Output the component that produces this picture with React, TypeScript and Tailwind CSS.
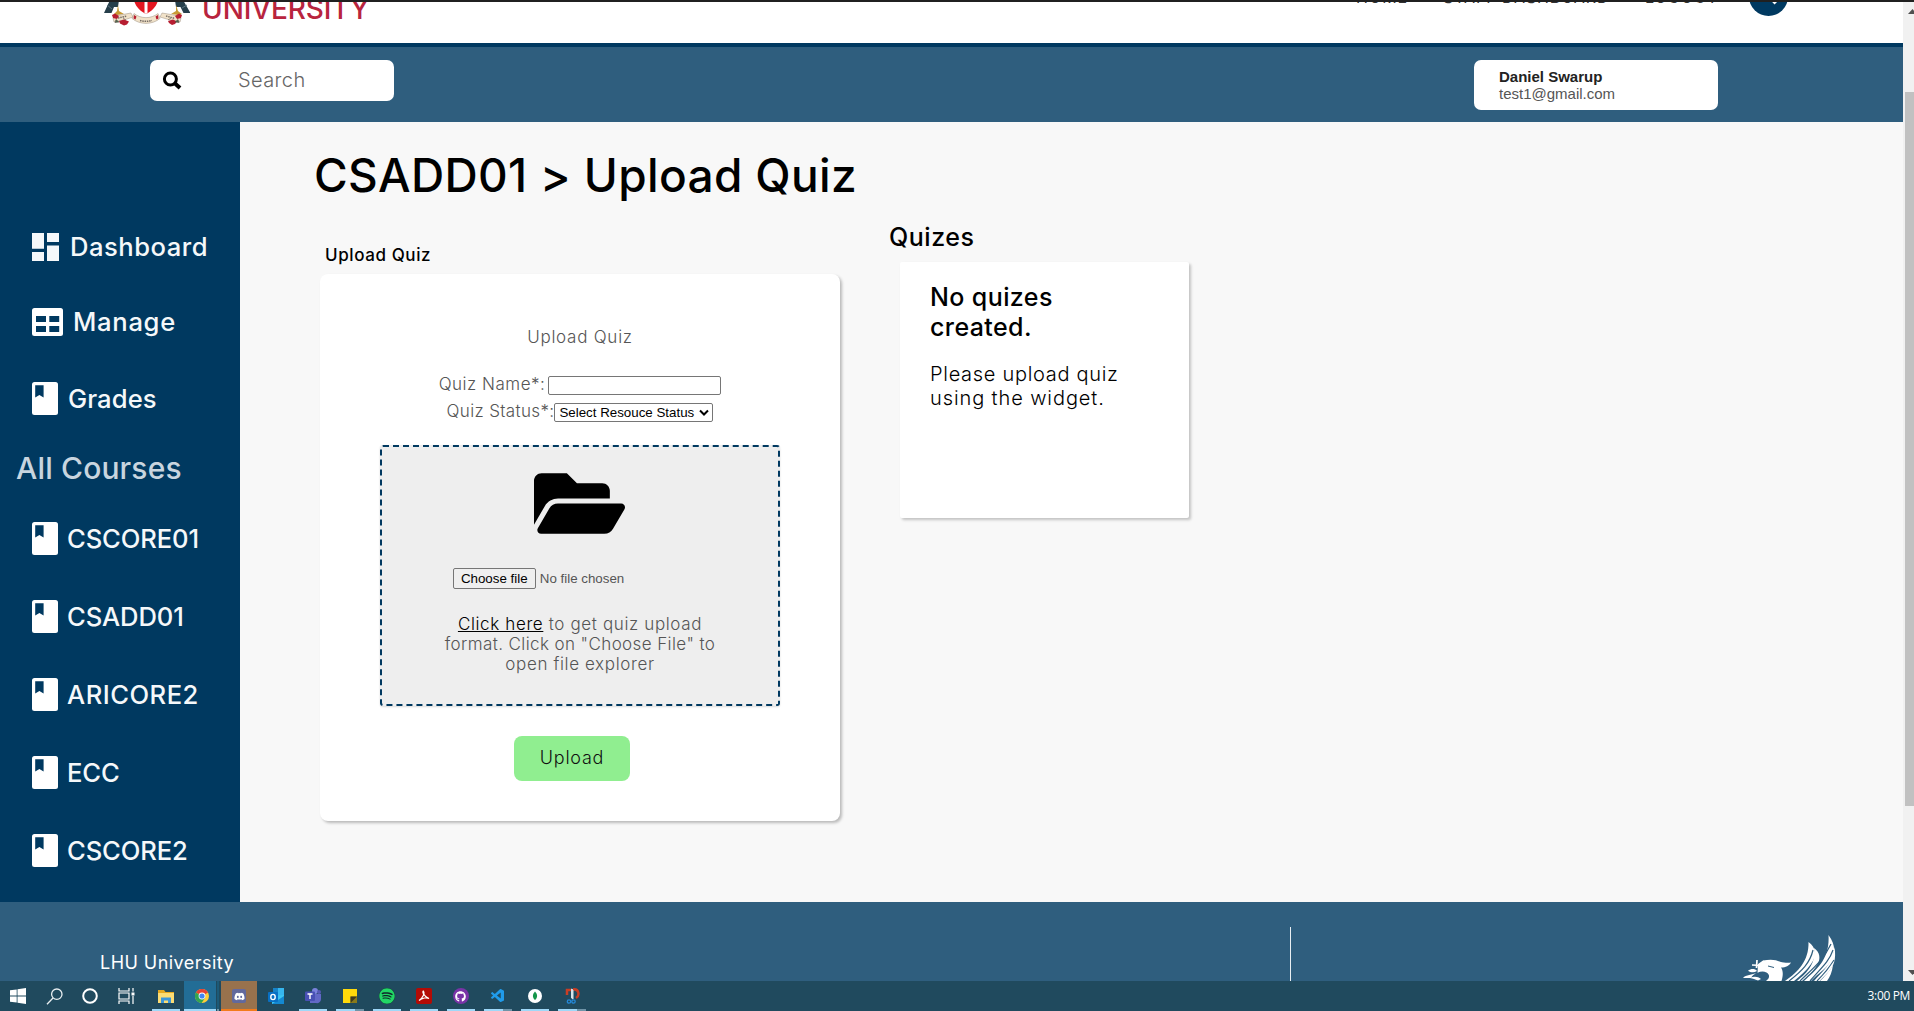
import React from 'react';
import { FaFolderOpen, FaSpotify, FaGithub, FaDiscord } from 'react-icons/fa';
import { VscVscode } from 'react-icons/vsc';

const BookIcon = () => (
  <svg className="-mt-px h-[33px] w-[26px]" viewBox="0 0 26 33">
    <rect width="26" height="33" rx="2.5" fill="#fff" />
    <path d="M3.200 3.200h8.400v12.400l-4.200-2.500-4.200 2.500z" fill="#003960" />
  </svg>
);

const DashboardIcon = () => (
  <svg className="h-7 w-[27px]" viewBox="0 0 27 28" fill="#f5f8fa">
    <path d="M0 0h12v15.7H0zM0 19h12v9H0zM15 0h12v9H15zM15 12.5h12V28H15z" />
  </svg>
);

const TableIcon = () => (
  <svg className="-mt-px h-7 w-[31px]" viewBox="0 0 31 28">
    <rect width="31" height="28" rx="2.5" fill="#fff" />
    <path d="M4 8h10v6H4zM17.3 8h9.9v6h-9.9zM4 18h10v6H4zM17.3 18h9.9v6h-9.9z" fill="#003960" />
  </svg>
);

const Crest = () => (
  <svg className="h-7 w-[90px]" viewBox="100 0 90 28">
    <path d="M110 0h9l-1 7h-4l-2.500 6h-7.500z" fill="#263f4b" />
    <path d="M175 0h8l7.500 13h-7l-3-6h-4.500z" fill="#263f4b" />
    <path d="M107 5l5 4M182 8l5-3" stroke="#5b7480" strokeWidth="1" />
    <path d="M118 5l1 6 5 3-7 1-3-1 3-3zM176 5l0 6-5 3 7 1 4-1-4-3z" fill="#c79a35" />
    <path d="M134 0h24c-1 6-6 11-12 14-6-3-11-8-12-14z" fill="#e31620" />
    <path d="M144.500 0h3v13l-1.500 1-1.500-1z" fill="#fff" />
    <path d="M113 18l7-3 11-2 2 4-9 3-10 2z" fill="#f1e2c9" stroke="#9b8f80" strokeWidth=".5" />
    <path d="M181 18l-7-3-12-2-2 4 10 3 10 2z" fill="#f1e2c9" stroke="#9b8f80" strokeWidth=".5" />
    <path d="M134 13.500c7 5.500 17 5.500 24 0l2 5c-8 6.500-20 6.500-28 0z" fill="#f1e2c9" stroke="#9b8f80" strokeWidth=".5" />
    <path d="M140 20.500c4 1 8 1 12 0M118 18l9-2M166 16l9 2.500" stroke="#766d65" strokeWidth="1.500" strokeDasharray="1.500 .8" fill="none" />
    <path d="M112 15l3-1.500 4 2.500-2 3-4-1zM119 21l5-1.500 5 2-2 3-3 1-4-2zM134 15l2.500 1.500-1 3-2-1zM158 15l-2.500 1.500 1 3 2-1zM182 15l-3-1.500-4 2.500 2 3 4-1zM168 21l5-1.500 4 2-2 2.500-3 1-3-2z" fill="#b71e31" />
    <path d="M116 19.500l3 2.500-4 .5zM178 19.500l-3 2.500 4 .5zM123 18l3 2M171 18l-3 2" fill="#4c6a4e" stroke="#5b5147" strokeWidth=".6" />
  </svg>
);

const Phoenix = () => (
  <svg className="h-[47px] w-[96px]" viewBox="1741 934 96 47" fill="#fff">
    <path d="M1758 964l5-3.500c7-1.500 13-1 17 1.200 4 .9 7 1.300 11 .8-2 3.500-5 5-10 5 2 3 2.500 7 .5 13.500h-15.500c4-3 4-6.500.5-8.500-3-1.500-6-1-9 .2z" />
    <path d="M1757 960l-.5 8M1752 965l10 .5M1764 961l-4 8" stroke="#fff" strokeWidth="1.700" />
    <path d="M1768 966l6 1.500" stroke="#2f5e7e" strokeWidth="1" />
    <path d="M1757 971c-2-2.500-6-2.500-9-.3 3 2 6 2.300 9 .3zM1757 973c-4 1.500-5 3.500-6 4.800-3 0-6 .7-8 0 3-2.800 9-3.300 14-4.800zM1750 978c4-2 8-1.500 11 1l-3 1.500c-3-1.200-5-1.700-8-2.500z" />
    <path d="M1785 981c13-9 24-20 23.500-39 8 6 8.500 14 2.500 22-5 7-11 12-17 17z" />
    <path d="M1797 981c11-9 19-18 17-33 6 4 7 11 3 17-4 7-10 11-15 16z" />
    <path d="M1804 981c13-12 26-22 24.500-46 9 12 6 22-.5 30-6 7-13 11-17 16z" />
    <path d="M1814 981c9-10 18-17 20.500-34 2 13-1 19-6 25l-9 9z" />
    <path d="M1820 981c5-5 9-9 13-16-1 7-3 12-6 16z" />
    <path d="M1789 981c13-10 21-18 24-31M1800 981c12-12 23-20 31-37M1810 981c10-12 19-19 23-31M1817 981c7-7 12-13 17-21" stroke="#2f5e7e" strokeWidth="1.200" fill="none" />
  </svg>
);

const courses = ['CSCORE01', 'CSADD01', 'ARICORE2', 'ECC', 'CSCORE2'];

function TopBar() {
  return (
    <div className="h-[43px] overflow-hidden border-t-2 border-[#202020] bg-white">
      <div className="-mt-0.5 flex items-start pl-[100px]">
        <Crest />
        <div className="-mt-[5px] ml-[12px] text-[28px] leading-7 font-medium tracking-[-0.1px] text-[#b8243e]">UNIVERSITY</div>
        <div className="-mt-[13px] ml-auto flex text-[16px] leading-5 font-normal text-[#333]">
          <span className="w-[87px] tracking-[1px]">HOME</span>
          <span className="w-[202px] tracking-[.9px]">STAFF DASHBOARD</span>
          <span className="w-[104px] tracking-[1px]">LOGOUT</span>
        </div>
        <div className="mr-[115px] -mt-[23px] size-[39px] rounded-full bg-[#003960]">
          <svg viewBox="0 0 39 39"><path d="M18 17l9 9" stroke="#fff" strokeWidth="4" /></svg>
        </div>
      </div>
    </div>
  );
}

function SearchBar() {
  return (
    <div className="flex h-[79px] items-start justify-between border-t-4 border-[#003960] bg-[#2f5e7e] pt-[13px] pr-[185px] pl-[150px]">
      <div className="flex h-[41px] w-[244px] items-center rounded-[7px] bg-white pl-[12px]">
        <svg className="h-[19px] w-5" viewBox="0 0 20 19" fill="none" stroke="#000">
          <circle cx="8.400" cy="8" r="6" strokeWidth="3" />
          <path d="M12.500 12l5.500 5" strokeWidth="4" />
        </svg>
        <span className="-mt-px ml-[56px] text-[20px] font-light tracking-[.4px] text-[#666]">Search</span>
      </div>
      <div className="h-[50px] w-[244px] rounded-[7px] bg-white pt-2 pl-[25px] font-['Liberation_Sans',sans-serif] text-[15px] leading-[17px]">
        <div className="font-bold text-[#222]">Daniel Swarup</div>
        <div className="text-[#555]">test1@gmail.com</div>
      </div>
    </div>
  );
}

function Sidebar() {
  return (
    <aside className="w-60 shrink-0 bg-[#003960] pt-[87px] text-[25.6px] font-medium text-[#f5f8fa]">
      <div className="flex h-[76px] items-center pl-8"><DashboardIcon /><span className="mt-px ml-[11px] tracking-[.5px]">Dashboard</span></div>
      <div className="flex h-[75px] items-center pl-8"><TableIcon /><span className="ml-[10px] tracking-[.7px]">Manage</span></div>
      <div className="flex h-[78px] items-center pl-8"><BookIcon /><span className="mt-px ml-[10px] tracking-[.1px]">Grades</span></div>
      <div className="-mt-px mb-px flex h-[62px] items-center pl-4 text-[30px] tracking-[.15px] text-[#c8d5df]">All Courses</div>
      {courses.map((c) => (
        <div key={c} className="flex h-[78px] items-center pl-8">
          <BookIcon />
          <span className={`mt-px ml-[9px] ${c === 'ARICORE2' ? 'tracking-[.5px]' : 'tracking-[-.1px]'}`}>{c}</span>
        </div>
      ))}
    </aside>
  );
}

function UploadCard() {
  return (
    <div className="ml-[7px] flex h-[547px] w-[520px] flex-col items-center rounded-lg bg-white text-[17px] font-light tracking-[.5px] text-[#555] shadow-[2px_2px_3px_rgba(0,0,0,.25)]">
      <div className="mt-[53px] leading-5 tracking-[.75px]">Upload Quiz</div>
      <div className="mt-[29px] flex items-center leading-[19px]">
        <span className="-mt-[3px] mr-[3px]">Quiz Name*:</span>
        <div className="h-[19px] w-[173px] rounded-[2px] border border-[#767676] bg-white" />
      </div>
      <div className="mt-2 flex items-center leading-[19px]">
        <span className="-mt-[3px] tracking-[.35px]">Quiz Status*:</span>
        <div className="flex h-[19px] w-[159px] items-center rounded-[2px] border border-[#767676] bg-white pl-1 font-['Liberation_Sans',sans-serif] text-[13.33px] font-normal tracking-normal text-black">
          Select Resouce Status
          <svg className="ml-[5px] h-2 w-[10px]" viewBox="0 0 10 8" fill="none" stroke="#000" strokeWidth="2"><path d="M1 1.500l4 4 4-4" /></svg>
        </div>
      </div>
      <div className="mt-[23px] flex h-[261px] w-[400px] flex-col items-center rounded-[3px] border-2 border-dashed border-[#003960] bg-[#eee] shadow-[0_1px_2px_rgba(0,0,0,.15)]">
        <FaFolderOpen className="mt-[16px] mr-0.5 h-[81px] w-[91px] text-black" />
        <div className="mt-6 mr-[83px] flex items-center font-['Liberation_Sans',sans-serif] text-[13.33px] font-normal tracking-normal">
          <div className="mr-1 flex h-[21px] w-[83px] items-center justify-center rounded-[2px] border border-[#767676] bg-[#efefef] text-black">Choose file</div>
          <span>No file chosen</span>
        </div>
        <p className="mt-[25px] text-center text-[17px] leading-5 tracking-[.63px] whitespace-nowrap">
          <span className="text-black underline">Click here</span> to get quiz upload<br />
          <span className="tracking-[.4px]">format. Click on "Choose File" to</span><br />
          open file explorer
        </p>
      </div>
      <div className="mt-[30px] mr-[16px] flex h-[45px] w-[116px] items-center justify-center rounded-lg bg-[#90ee90] text-[18px] tracking-[.75px] text-[#111]"><span className="-mt-0.5">Upload</span></div>
    </div>
  );
}

function MainContent() {
  return (
    <main className="flex-1 bg-[#f8f8f8] pt-7 pl-[73px] text-black">
      <h1 className="pl-px text-[46px] leading-[50px] font-[450] tracking-[.35px]">CSADD01 &gt; Upload Quiz</h1>
      <div className="flex">
        <section className="pt-[45px]">
          <h2 className="mb-[9px] pl-[12px] text-[17px] leading-5 font-[450] tracking-[.6px]">Upload Quiz</h2>
          <UploadCard />
        </section>
        <section className="ml-[49px] pt-[22px]">
          <h2 className="text-[25px] leading-[30px] font-[450] tracking-[.55px]">Quizes</h2>
          <div className="mt-[10px] ml-[11px] h-64 w-[289px] rounded-[2px] bg-white pt-5 pl-[30px] shadow-[2px_2px_3px_rgba(0,0,0,.22)]">
            <h3 className="text-[25px] leading-[30px] font-medium tracking-[.4px]">No quizes<br />created.</h3>
            <p className="mt-5 text-[20px] leading-6 font-light tracking-[.7px]">Please upload quiz<br /><span className="tracking-[.9px]">using the widget.</span></p>
          </div>
        </section>
      </div>
    </main>
  );
}

function Footer() {
  return (
    <footer className="flex h-[79px] bg-[#2f5e7e] pl-[100px] text-white">
      <div className="mt-[51px] w-[1190px] text-[18px] leading-5 font-normal tracking-[.45px]">LHU University</div>
      <div className="mt-[25px] w-px bg-[#e8eef2]" />
      <div className="mt-8 ml-[450px]"><Phoenix /></div>
    </footer>
  );
}

function TaskSlot({ children, bar }: { children: React.ReactNode; bar?: 'full' | 'split' }) {
  return (
    <div className="flex h-[30px] w-[37px] flex-col items-center">
      <div className="flex h-7 w-full items-center justify-center pt-0.5">{children}</div>
      {bar === 'full' && <div className="h-0.5 w-7 bg-[#9fd8f8]" />}
      {bar === 'split' && <div className="flex h-0.5 w-7"><div className="w-[19px] bg-[#9fd8f8]" /><div className="flex-1 bg-[#6f94a8]" /></div>}
    </div>
  );
}

function Taskbar() {
  return (
    <div className="flex h-[30px] items-start bg-[#204a5e] text-white">
      <div className="flex w-36">
        <div className="flex h-[30px] w-9 items-center justify-center"><svg className="size-4" viewBox="0 0 16 16" fill="#fff"><path d="M0 2.300l6.700-.9v6.200H0zM7.500 1.300L16 0v7.600H7.500zM0 8.400h6.700v6.200L0 13.700zM7.500 8.400H16V16l-8.500-1.200z" /></svg></div>
        <div className="flex h-[30px] w-9 items-center justify-center"><svg className="size-[17px]" viewBox="0 0 17 17" fill="none" stroke="#e8eef0" strokeWidth="1.300"><circle cx="10.800" cy="6.200" r="5.200" /><path d="M7 10l-6 6.300" /></svg></div>
        <div className="flex h-[30px] w-9 items-center justify-center"><svg className="size-4" viewBox="0 0 16 16" fill="none" stroke="#fff" strokeWidth="2"><circle cx="8" cy="8" r="6.800" /></svg></div>
        <div className="flex h-[30px] w-9 items-center justify-center"><svg className="h-4 w-[17px]" viewBox="0 0 17 16" fill="none" stroke="#fff" strokeWidth="1.200"><path d="M1 0v3h10V0M1 16v-3h10v3M1 5h10v6H1zM15 0v3.500M15 8v8" /><path d="M13.500 4.500h3v3h-3z" fill="#fff" stroke="none" /></svg></div>
      </div>
      <div className="ml-[3px] flex">
        <TaskSlot bar="full"><svg className="h-[15px] w-4" viewBox="0 0 16 15"><path d="M0 1h6l1.500 2H16v11H0z" fill="#e5a921" /><path d="M0 4h16v10H0z" fill="#fcdc73" /><path d="M3 14V8.500h10V14h-3v-2.500H6V14z" fill="#3c96d8" /></svg></TaskSlot>
        <div className="flex h-[30px] w-8 flex-col items-center bg-[#226d96]">
          <div className="flex h-7 items-center pt-0.5 pl-1"><svg className="size-[14px]" viewBox="0 0 14 14"><circle cx="7" cy="7" r="7" fill="#ffce3a" /><path d="M7 7L.9 3.500A7 7 0 0113.100 3.500z" fill="#e64235" /><path d="M.9 3.500A7 7 0 006.600 14L10 9z" fill="#31a552" /><circle cx="7" cy="7" r="3.400" fill="#fff" /><circle cx="7" cy="7" r="2.600" fill="#4285f4" /></svg></div>
          <div className="h-0.5 w-full bg-[#9fd8f8]" />
        </div>
        <div className="mr-0.5 ml-px h-[30px] w-0.5 border-b-2 border-[#6f94a8] bg-[#1c5a78]" />
        <div className="flex h-[30px] w-9 flex-col items-center bg-[#98724d]">
          <div className="flex h-7 items-center pt-0.5"><span className="flex size-[14px] items-center justify-center rounded-[2px] bg-[#62699d]"><FaDiscord className="size-[11px] text-white" /></span></div>
          <div className="h-0.5 w-full bg-[#f27b1b]" />
        </div>
        <TaskSlot><svg className="size-4" viewBox="0 0 16 16"><path d="M5 0h11v9H5z" fill="#36b6ee" /><path d="M5 0h5v5H5z" fill="#1683c8" /><path d="M4 8l12-1v9H4z" fill="#3bc5f2" /><path d="M4 16l12-8v8z" fill="#1489d1" /><rect y="4" width="10" height="10" rx="1" fill="#0870c4" /><ellipse cx="5" cy="9" rx="2.200" ry="2.600" fill="none" stroke="#fff" strokeWidth="1.400" /></svg></TaskSlot>
        <TaskSlot bar="full"><svg className="size-4" viewBox="0 0 16 16"><circle cx="10" cy="3" r="3" fill="#7a82dc" /><circle cx="14" cy="4" r="2" fill="#5558b5" /><path d="M5 6h11v5a4 4 0 01-5 4H5z" fill="#6268c6" /><rect y="3.500" width="10" height="9.500" rx="1" fill="#4850b5" /><path d="M2.500 6h5M5 6v5" stroke="#fff" strokeWidth="1.400" /></svg></TaskSlot>
        <TaskSlot bar="split"><svg className="size-[14px]" viewBox="0 0 14 14"><path d="M0 0h14v14H0z" fill="#ffd90b" /><path d="M7.500 7.500H14V14H7.500z" fill="#8a7a1c" /><path d="M7.500 7.500H14L7.500 14z" fill="#3f3a20" /></svg></TaskSlot>
        <TaskSlot bar="full"><span className="rounded-full bg-[#10282b]"><FaSpotify className="size-4 text-[#22d665]" /></span></TaskSlot>
        <TaskSlot bar="full"><svg className="size-4" viewBox="0 0 16 16"><rect width="16" height="16" rx="2" fill="#b30b06" /><path d="M3 12.500C7 10 9 5 7.500 3c-1.500 0-.5 5 5.500 7.500-2-1.500-7-.5-10 2z" fill="none" stroke="#fff" strokeWidth="1.200" /></svg></TaskSlot>
        <TaskSlot bar="full"><span className="flex size-4 items-center justify-center rounded-full bg-[#7934a7]"><FaGithub className="size-[11px] text-white" /></span></TaskSlot>
        <TaskSlot bar="split"><VscVscode className="size-4 text-[#209bea]" /></TaskSlot>
        <TaskSlot bar="full"><svg className="size-[14px]" viewBox="0 0 14 14"><circle cx="7" cy="7" r="7" fill="#fff" /><path d="M7 2.500c3 3 2.500 6.500 0 8.500-2.500-2-3-5.500 0-8.500z" fill="#15964a" /></svg></TaskSlot>
        <TaskSlot bar="split"><svg className="size-4" viewBox="0 0 16 16" fill="none"><path d="M3 7V2h4M9 1.500c6-1 7 6 3 8.500" stroke="#c93e25" strokeWidth="2.500" /><path d="M7.500 1v9l1.500 1V2z" fill="#d8e3e8" stroke="#d8e3e8" /><circle cx="5" cy="13.500" r="1.700" stroke="#2588d8" strokeWidth="1.300" /><circle cx="9.500" cy="13.500" r="1.700" stroke="#2588d8" strokeWidth="1.300" /></svg></TaskSlot>
      </div>
      <div className="mt-[5px] mr-1 ml-auto font-['Open_Sans',sans-serif] text-[12px] leading-5 tracking-[-.35px]">3:00 PM</div>
    </div>
  );
}

export default function App() {
  return (
    <div className="h-[1011px] w-[1914px] overflow-hidden bg-[#202020] font-['Inter',sans-serif]">
      <div className="flex h-[981px]">
        <div className="w-[1903px]">
          <TopBar />
          <SearchBar />
          <div className="flex h-[780px]">
            <Sidebar />
            <MainContent />
          </div>
          <Footer />
        </div>
        <div className="flex w-[11px] flex-col border-t-2 border-[#202020] bg-[#f1f1f1]">
          <svg className="mt-[7px] ml-[5px] h-[5px] w-[6px]" viewBox="0 0 6 5" fill="#505050"><path d="M0 5l4.500-5L9 5z" /></svg>
          <div className="mt-[78px] ml-0.5 h-[714px] bg-[#c1c1c1]" />
          <svg className="mt-[164px] ml-[5px] h-[5px] w-[6px]" viewBox="0 0 6 5" fill="#505050"><path d="M0 0l4.500 5L9 0z" /></svg>
        </div>
      </div>
      <Taskbar />
    </div>
  );
}
